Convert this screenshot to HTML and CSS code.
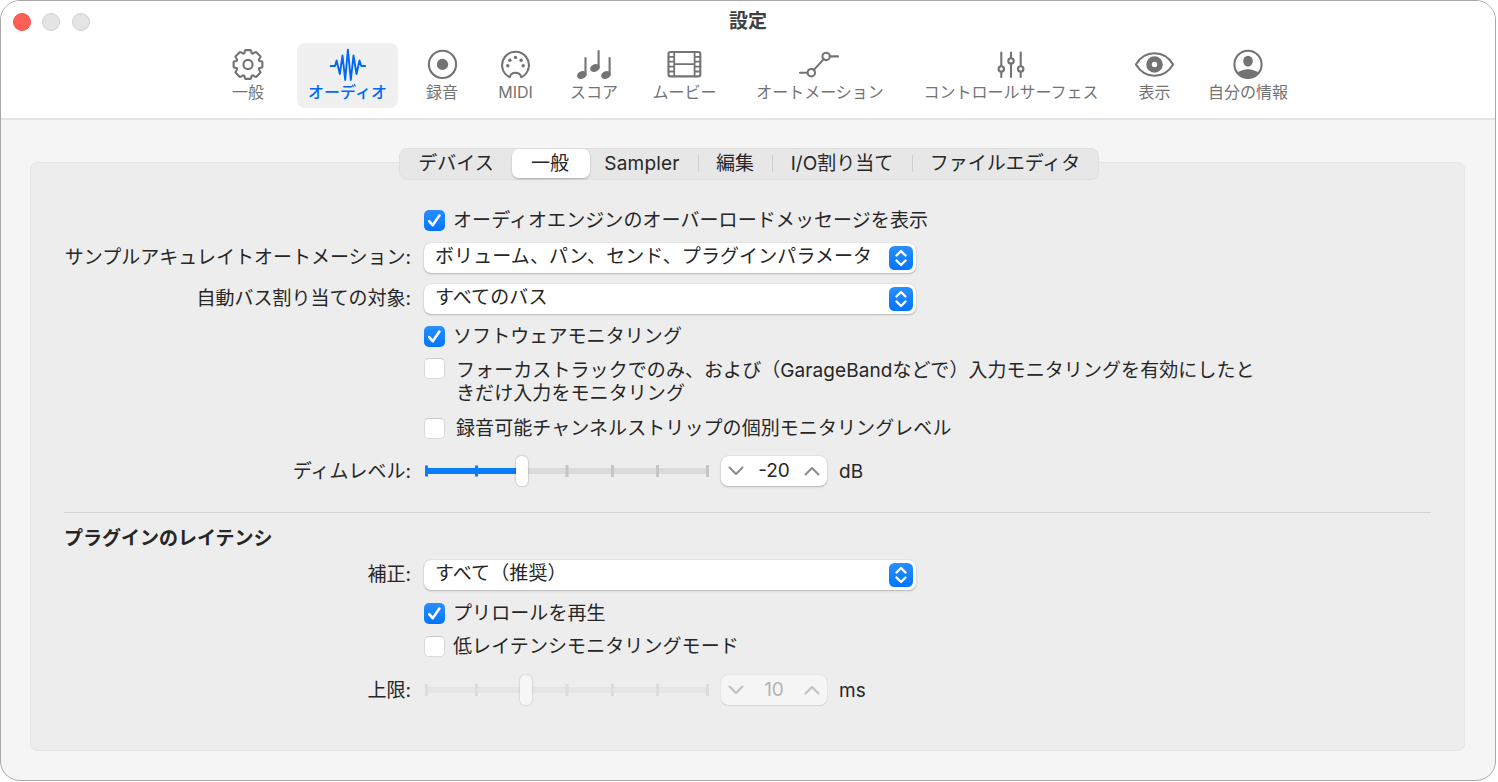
FILE: index.html
```html
<!DOCTYPE html>
<html lang="ja">
<head>
    <meta charset="UTF-8">
    <meta name="viewport" content="width=device-width, initial-scale=1.0">
    <title>設定</title>
    <link rel="stylesheet" href="styles.css">
</head>
<body>
    <div class="window">
        <header class="header">
            <div class="titlebar">
                <div class="lights">
                    <span class="light close"></span>
                    <span class="light"></span>
                    <span class="light"></span>
                </div>
                <h1 class="title">設定</h1>
            </div>
            <nav class="toolbar">
                <a class="tool">
                    <svg class="icon" viewBox="-20 -16 40 32">
                        <g transform="translate(0 -.5)">
                            <path d="M-2.2-14.4H2.2Q3-14.4 3.1-13.6L3.5-11.8Q4-10.5 5.3-11.1L7-12.2Q7.9-12.7 8.6-12.1L12.1-8.6Q12.7-7.9 12.2-7L11.1-5.3Q10.5-4 11.8-3.5L13.6-3.1Q14.4-3 14.4-2.2V2.2Q14.4 3 13.6 3.1L11.8 3.5Q10.5 4 11.1 5.3L12.2 7Q12.7 7.9 12.1 8.6L8.6 12.1Q7.9 12.7 7 12.2L5.3 11.1Q4 10.5 3.5 11.8L3.1 13.6Q3 14.4 2.2 14.4H-2.2Q-3 14.4-3.1 13.6L-3.5 11.8Q-4 10.5-5.3 11.1L-7 12.2Q-7.9 12.7-8.6 12.1L-12.1 8.6Q-12.7 7.9-12.2 7L-11.1 5.3Q-10.5 4-11.8 3.5L-13.6 3.1Q-14.4 3-14.4 2.2V-2.2Q-14.4-3-13.6-3.1L-11.8-3.5Q-10.5-4-11.1-5.3L-12.2-7Q-12.7-7.9-12.1-8.6L-8.6-12.1Q-7.9-12.7-7-12.2L-5.3-11.1Q-4-10.5-3.5-11.8L-3.1-13.6Q-3-14.4-2.2-14.4Z"/>
                            <circle r="4.6"/>
                        </g>
                    </svg>
                    <span>一般</span>
                </a>
                <a class="tool active">
                    <svg class="icon" viewBox="-20 -16 40 32">
                        <path d="M-17.3 1H-13L-11.4-4.5L-8.2 9L-5.5-9.5L-2.8 15L-.1-15.3L2.8 15L5.5-9.5L8.5 9L11.5-4.5L13.3 1H17.2" stroke-width="1.9"/>
                    </svg>
                    <span>オーディオ</span>
                </a>
                <a class="tool">
                    <svg class="icon" viewBox="-20 -16 40 32">
                        <circle cx=".5" cy="-.6" r="13.6"/>
                        <circle class="solid" cx=".5" cy="-.6" r="5.6"/>
                    </svg>
                    <span>録音</span>
                </a>
                <a class="tool">
                    <svg class="icon" viewBox="-19.5 -16 40 32">
                        <path d="M-5.8 12.2A13.4 13.4 0 1 1 5.8 12.2A6 6 0 0 0-5.8 12.2Z"/>
                        <g class="solid">
                            <circle cx="-7.7" cy=".7" r="1.7"/>
                            <circle cx="-5.6" cy="-4.8" r="1.7"/>
                            <circle cy="-7.6" r="1.7"/>
                            <circle cx="5.6" cy="-4.8" r="1.7"/>
                            <circle cx="7.7" cy=".7" r="1.7"/>
                        </g>
                    </svg>
                    <span>MIDI</span>
                </a>
                <a class="tool">
                    <svg class="icon" viewBox="-20 -16 40 32">
                        <path d="M-8.5-7V10M4.6-14V3M15.6-7V10"/>
                        <g class="solid">
                            <ellipse cx="-12.2" cy="10" rx="4.9" ry="3.8" transform="rotate(-20 -12.2 10)"/>
                            <ellipse cx=".9" cy="3" rx="4.9" ry="3.8" transform="rotate(-20 .9 3)"/>
                            <ellipse cx="11.9" cy="10" rx="4.9" ry="3.8" transform="rotate(-20 11.9 10)"/>
                        </g>
                    </svg>
                    <span>スコア</span>
                </a>
                <a class="tool">
                    <svg class="icon" viewBox="-19.5 -16 40 32">
                        <rect x="-16" y="-13" width="31.8" height="24.4" rx="1.8"/>
                        <path d="M-10.3-13V11.4M10.1-13V11.4M-10.3-.9H10.1M-16-8.2H-10.3M-16-3.3H-10.3M-16 1.6H-10.3M-16 6.5H-10.3M10.1-8.2H15.8M10.1-3.3H15.8M10.1 1.6H15.8M10.1 6.5H15.8" stroke-width="1.8"/>
                    </svg>
                    <span>ムービー</span>
                </a>
                <a class="tool">
                    <svg class="icon" viewBox="-19.5 -16 40 32">
                        <path d="M-19.5 7.7H-12M10.4-8.6H18.5M-5.6 4.9L4.2-5.9"/>
                        <circle cx="-8.2" cy="7.7" r="3.7"/>
                        <circle cx="6.6" cy="-8.6" r="3.7"/>
                    </svg>
                    <span>オートメーション</span>
                </a>
                <a class="tool">
                    <svg class="icon" viewBox="-20 -16 40 32">
                        <path d="M-9.7-12.5V1M-9.7 6.7V12M0-12.5V-7M0-1.3V12M9.7-12.5V1M9.7 6.7V12"/>
                        <circle cx="-9.7" cy="3.9" r="2.7"/>
                        <circle cy="-4.1" r="2.7"/>
                        <circle cx="9.7" cy="3.9" r="2.7"/>
                    </svg>
                    <span>コントロールサーフェス</span>
                </a>
                <a class="tool">
                    <svg class="icon" viewBox="-19.5 -16 40 32">
                        <path d="M-18.6-.5C-14.5-7.3-8-11.7 0-11.7S14.5-7.3 18.6-.5C14.5 6.3 8 10.7 0 10.7S-14.5 6.3-18.6-.5Z"/>
                        <circle cy="-.5" r="5.5" stroke-width="5.6"/>
                    </svg>
                    <span>表示</span>
                </a>
                <a class="tool">
                    <svg class="icon" viewBox="-20 -16 40 32">
                        <circle cy="-.6" r="13.6"/>
                        <ellipse class="solid" cy="-3.9" rx="4.8" ry="5.4"/>
                        <path class="solid" d="M-10.6 8.2C-7.5 5.4-4 4.3 0 4.3S7.5 5.4 10.6 8.2C8 11.6 4.5 13.4 0 13.4S-8 11.6-10.6 8.2Z"/>
                    </svg>
                    <span>自分の情報</span>
                </a>
            </nav>
        </header>

        <main class="content">
            <div class="tabs">
                <span class="tab">デバイス</span>
                <span class="tab selected">一般</span>
                <span class="tab sampler">Sampler</span>
                <span class="tab divided">編集</span>
                <span class="tab divided">I/O割り当て</span>
                <span class="tab divided">ファイルエディタ</span>
            </div>

            <div class="panel">
                <section class="form audio">
                    <label class="check">
                        <svg class="box on" viewBox="0 0 21 21"><path d="M5.2 11.2L8.7 15.2L15.4 5.6"/></svg>
                        <span>オーディオエンジンのオーバーロードメッセージを表示</span>
                    </label>
                    <span class="label">サンプルアキュレイトオートメーション:</span>
                    <div class="select">
                        <span>ボリューム、パン、センド、プラグインパラメータ</span>
                        <svg class="arrows" viewBox="0 0 24 24"><path d="M7.5 9.5L12 5L16.5 9.5M7.5 14.5L12 19L16.5 14.5"/></svg>
                    </div>
                    <span class="label">自動バス割り当ての対象:</span>
                    <div class="select">
                        <span>すべてのバス</span>
                        <svg class="arrows" viewBox="0 0 24 24"><path d="M7.5 9.5L12 5L16.5 9.5M7.5 14.5L12 19L16.5 14.5"/></svg>
                    </div>
                    <label class="check">
                        <svg class="box on" viewBox="0 0 21 21"><path d="M5.2 11.2L8.7 15.2L15.4 5.6"/></svg>
                        <span>ソフトウェアモニタリング</span>
                    </label>
                    <label class="check wide multiline">
                        <span class="box"></span>
                        <span>フォーカストラックでのみ、および（GarageBandなどで）入力モニタリングを有効にしたと<br>きだけ入力をモニタリング</span>
                    </label>
                    <label class="check wide">
                        <span class="box"></span>
                        <span>録音可能チャンネルストリップの個別モニタリングレベル</span>
                    </label>
                    <span class="label low">ディムレベル:</span>
                    <div class="level">
                        <svg class="slider" viewBox="0 0 286 36">
                            <rect class="track" x="2" y="15" width="282" height="6"/>
                            <path class="ticks" d="M143 12V24M188.500 12V24M233.500 12V24M283.500 12V24"/>
                            <rect class="fill" x="2" y="15" width="94" height="6"/>
                            <path class="ticks filled" d="M2.500 12.500V23.500M52.500 12.500V23.500"/>
                            <rect class="thumb" x="92" y="3" width="12" height="30" rx="5.500"/>
                        </svg>
                        <div class="stepper">
                            <svg class="chevron" viewBox="0 0 16 10"><path d="M1.500 1.500L8 8L14.500 1.500"/></svg>
                            <span>-20</span>
                            <svg class="chevron" viewBox="0 0 16 10"><path d="M1.500 8.500L8 2L14.500 8.500"/></svg>
                        </div>
                        <span class="unit">dB</span>
                    </div>
                </section>

                <h2 class="heading">プラグインのレイテンシ</h2>
                <section class="form latency">
                    <span class="label">補正:</span>
                    <div class="select">
                        <span>すべて（推奨）</span>
                        <svg class="arrows" viewBox="0 0 24 24"><path d="M7.5 9.5L12 5L16.5 9.5M7.5 14.5L12 19L16.5 14.5"/></svg>
                    </div>
                    <label class="check">
                        <svg class="box on" viewBox="0 0 21 21"><path d="M5.2 11.2L8.7 15.2L15.4 5.6"/></svg>
                        <span>プリロールを再生</span>
                    </label>
                    <label class="check">
                        <span class="box"></span>
                        <span>低レイテンシモニタリングモード</span>
                    </label>
                    <span class="label low">上限:</span>
                    <div class="level disabled">
                        <svg class="slider" viewBox="0 0 286 36">
                            <rect class="track" x="2" y="15" width="282" height="6"/>
                            <path class="ticks" d="M2.500 12V24M52.500 12V24M143 12V24M188.500 12V24M233.500 12V24M283.500 12V24"/>
                            <rect class="thumb" x="96" y="3" width="12" height="30" rx="5.500"/>
                        </svg>
                        <div class="stepper">
                            <svg class="chevron" viewBox="0 0 16 10"><path d="M1.500 1.500L8 8L14.500 1.500"/></svg>
                            <span>10</span>
                            <svg class="chevron" viewBox="0 0 16 10"><path d="M1.500 8.500L8 2L14.500 8.500"/></svg>
                        </div>
                        <span class="unit">ms</span>
                    </div>
                </section>
            </div>
        </main>
    </div>
</body>
</html>
```

FILE: styles.css
```css
* {
    box-sizing: border-box;
}
body {
    margin: 0;
    background: #fff;
    color: #262626;
    font-family: Inter, "Noto Sans CJK JP", sans-serif;
    font-size: 19px;
    line-height: 24px;
    white-space: nowrap;
}
.window {
    display: flex;
    flex-direction: column;
    width: 1496px;
    height: 781px;
    border: 1.5px solid #a9a9a9;
    border-radius: 20px;
    background: #f5f5f5;
    overflow: hidden;
}
.header {
    height: 119px;
    background: #fff;
    border-bottom: 2px solid #e3e3e3;
}
.titlebar {
    display: grid;
    grid-template-columns: 1fr auto 1fr;
    align-items: center;
    height: 42px;
    padding-left: 12px;
    padding-right: 12px;
}
.lights {
    display: flex;
    gap: 11.3px;
}
.light {
    width: 18px;
    height: 18px;
    border: 1px solid #d0d0d0;
    border-radius: 50%;
    background: #e4e4e4;
}
.light.close {
    background: #ff5f57;
    border-color: #ee5249;
}
.title {
    margin: 0;
    font-size: 19px;
    font-weight: 700;
    color: #404040;
    line-height: 24px;
    padding-bottom: 1px;
}

/* toolbar */
.toolbar {
    display: grid;
    grid-template-columns: 62px 101px 52px 59px 62px 83px 152px 194px 57px 94px;
    gap: 18px;
    padding-left: 216px;
}
.tool {
    display: flex;
    flex-direction: column;
    align-items: center;
    height: 65px;
    padding-top: 6px;
    border-radius: 8px;
    color: #737373;
    font-size: 16px;
    line-height: 22px;
}
.tool.active {
    background: #f0f0f0;
    color: #0068f5;
    font-weight: 500;
}
.icon {
    width: 40px;
    height: 32px;
    flex: none;
    fill: none;
    stroke: currentColor;
    stroke-width: 2.1;
    stroke-linejoin: round;
    stroke-linecap: round;
    overflow: visible;
}
.icon .solid {
    fill: currentColor;
    stroke: none;
}

/* tabs over the top edge of the panel */
.content {
    padding: 28px 30px 0 29px;
}
.tabs {
    display: grid;
    grid-template-columns: 112px 78px 108px 74px 140px 186px;
    position: relative;
    z-index: 1;
    width: 700px;
    height: 32px;
    margin-left: 369px;
    border: 1px solid #dfdfdf;
    border-radius: 8px;
    background: #e7e7e7;
}
.tab {
    display: flex;
    align-items: center;
    justify-content: center;
    height: 29px;
}
.tab.selected {
    padding-right: 2px;
    border-radius: 7px;
    background: #fff;
    box-shadow: 0 1px 2px rgba(0, 0, 0, 0.25);
}
.tab.sampler {
    padding-right: 4px;
    letter-spacing: 0.2px;
}
.tab.divided {
    background: linear-gradient(#cfcfcf, #cfcfcf) left center / 1px 17px no-repeat;
}
.panel {
    height: 589px;
    margin-top: -18px;
    padding: 41px 33px 0;
    border: 1px solid #e5e5e5;
    border-radius: 7px;
    background: #ededed;
}

/* form rows */
.form {
    display: grid;
    grid-template-columns: 347px 1fr;
    column-gap: 13px;
    align-items: center;
}
.audio {
    grid-template-rows: 32px 43px 39px 37px 54px 38px 48px;
}
.latency {
    grid-template-rows: 40px 37px 28px 60px;
}
.label {
    text-align: right;
}
.label.low {
    padding-top: 2px;
}
.check {
    grid-column: 2;
    display: flex;
    align-items: center;
    gap: 8px;
    letter-spacing: 0.08px;
}
.check span + span,
.check svg + span {
    padding-top: 1px;
}
.check.wide {
    gap: 11px;
}
.check.multiline {
    align-self: start;
    align-items: flex-start;
    padding-top: 3px;
    line-height: 23px;
}
.box {
    flex: none;
    width: 21px;
    height: 21px;
    border: 1px solid #dadada;
    border-top-color: #cacaca;
    border-radius: 5px;
    background: #fff;
}
.box.on {
    border: none;
    background: linear-gradient(#2a8fff, #0075ff);
    fill: none;
    stroke: #fff;
    stroke-width: 2.6;
    stroke-linecap: round;
    stroke-linejoin: round;
}
.select {
    display: flex;
    align-items: center;
    justify-content: space-between;
    width: 492px;
    height: 30px;
    padding: 0 3px 0 11px;
    border-radius: 7px;
    background: #fff;
    box-shadow: 0 0 1px rgba(0, 0, 0, 0.25), 0 1px 2px rgba(0, 0, 0, 0.22);
    letter-spacing: 0.1px;
}
.select span {
    padding-bottom: 2px;
}
.arrows {
    width: 24px;
    height: 24px;
    border-radius: 5.5px;
    background: linear-gradient(#2a8fff, #0075ff);
    fill: none;
    stroke: #fff;
    stroke-width: 2.4;
    stroke-linecap: round;
    stroke-linejoin: round;
}
.level {
    display: flex;
    align-items: center;
}
.slider {
    width: 286px;
    height: 36px;
    margin-right: 11px;
}
.track {
    fill: #dadada;
}
.fill {
    fill: #0a7cff;
}
.ticks {
    stroke: #c6c6c6;
    stroke-width: 3;
}
.ticks.filled {
    stroke: #0a7cff;
}
.thumb {
    fill: #fff;
    filter: drop-shadow(0 0.5px 1px rgba(0, 0, 0, 0.3));
}
.stepper {
    display: flex;
    align-items: center;
    justify-content: space-between;
    width: 106px;
    height: 30px;
    padding: 0 7px;
    border-radius: 7px;
    background: #fff;
    box-shadow: 0 0 1px rgba(0, 0, 0, 0.25), 0 1px 2px rgba(0, 0, 0, 0.22);
}
.chevron {
    width: 16px;
    height: 10px;
    fill: none;
    stroke: #8c8c8c;
    stroke-width: 2;
    stroke-linecap: round;
    stroke-linejoin: round;
}
.unit {
    margin-left: 12px;
    padding-top: 2px;
}
.disabled .track {
    fill: #e5e5e5;
}
.disabled .ticks {
    stroke: #dcdcdc;
}
.disabled .thumb {
    fill: #f6f6f6;
    filter: drop-shadow(0 0.5px 1px rgba(0, 0, 0, 0.2));
}
.disabled .stepper {
    background: #f5f5f5;
    color: #b4b4b4;
    box-shadow: 0 0 1px rgba(0, 0, 0, 0.2), 0 1px 1px rgba(0, 0, 0, 0.08);
}
.disabled .chevron {
    stroke: #c0c0c0;
}
.heading {
    margin: 17px 0 4px;
    padding-top: 14px;
    border-top: 1px solid #d3d3d3;
    font-size: 19px;
    font-weight: 700;
    line-height: 24px;
}
```
